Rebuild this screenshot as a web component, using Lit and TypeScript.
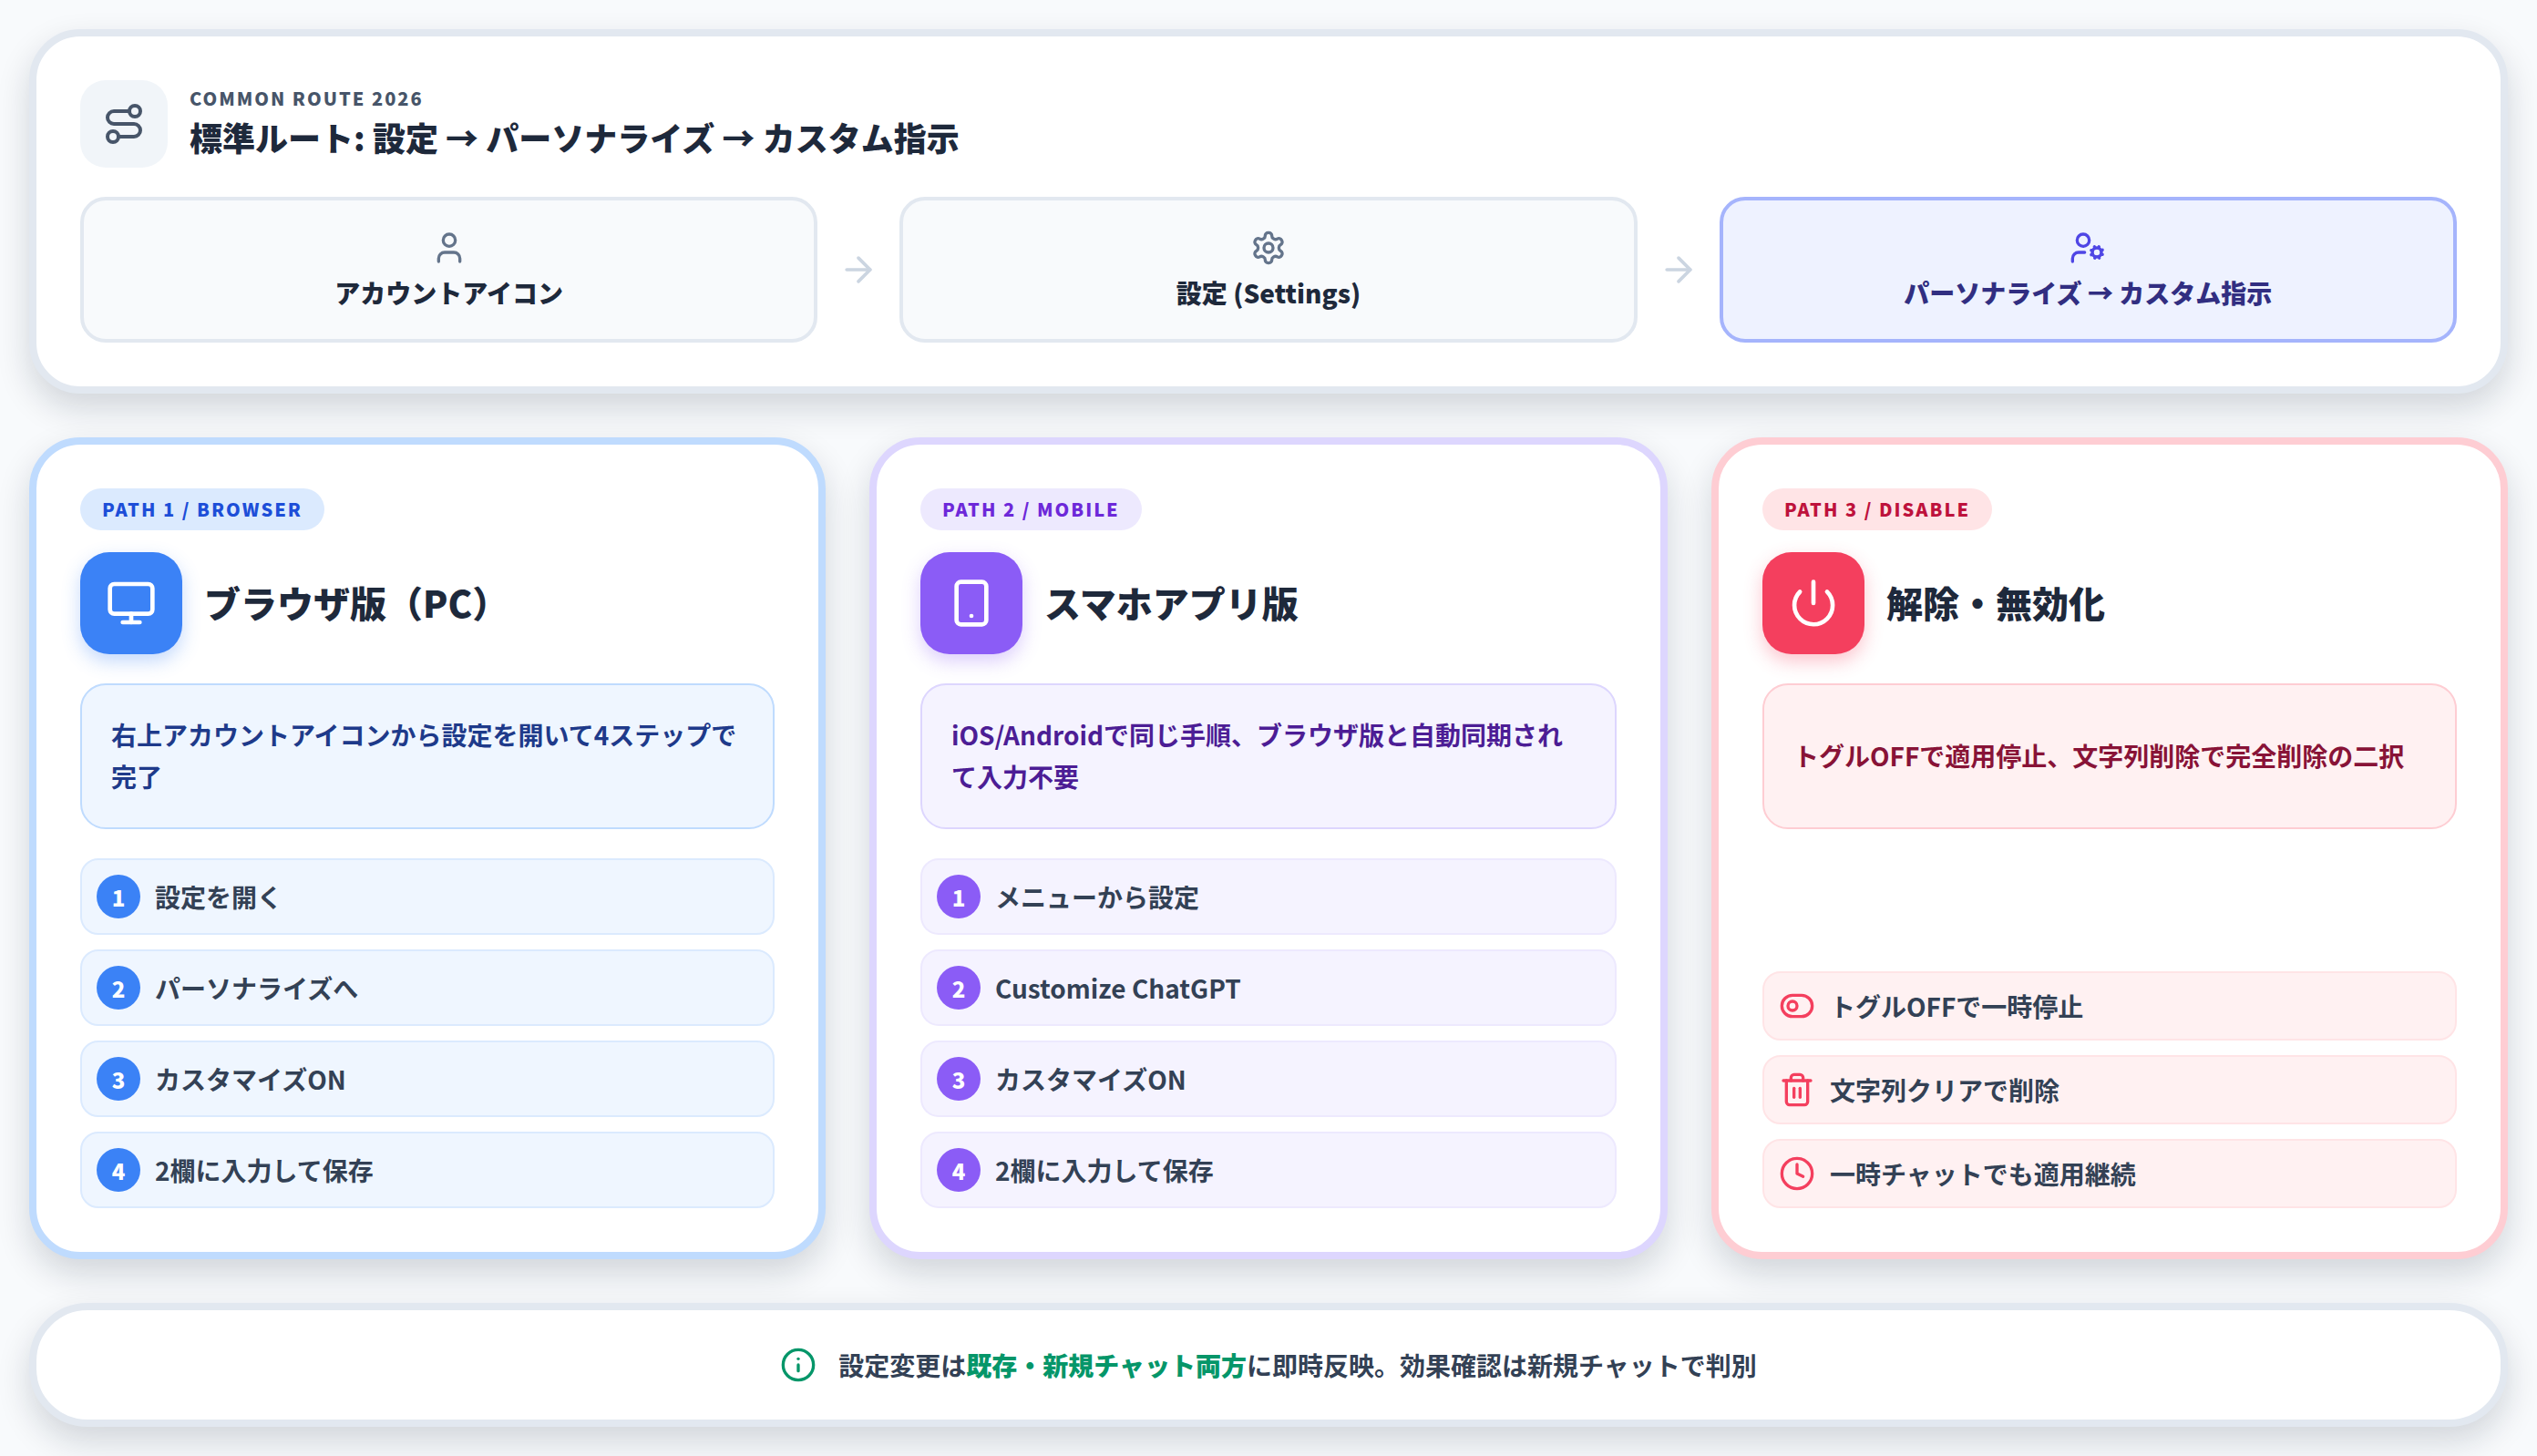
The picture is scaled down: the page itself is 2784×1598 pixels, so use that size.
import { LitElement, html, css, svg } from "lit";
import { customElement } from "lit/decorators.js";

const ic = (paths: unknown, size: number, cls = "") =>
  html`<svg class="ic ${cls}" style="width:${size}px;height:${size}px" viewBox="0 0 24 24" fill="none" stroke="currentColor" stroke-width="2" stroke-linecap="round" stroke-linejoin="round">${paths}</svg>`;

const I = {
  route: svg`<circle cx="6" cy="19" r="3"/><path d="M9 19h8.5a3.5 3.5 0 0 0 0-7h-11a3.5 3.5 0 0 1 0-7H15"/><circle cx="18" cy="5" r="3"/>`,
  user: svg`<path d="M19 21v-2a4 4 0 0 0-4-4H9a4 4 0 0 0-4 4v2"/><circle cx="12" cy="7" r="4"/>`,
  settings: svg`<path d="M12.22 2h-.44a2 2 0 0 0-2 2v.18a2 2 0 0 1-1 1.73l-.43.25a2 2 0 0 1-2 0l-.15-.08a2 2 0 0 0-2.73.73l-.22.38a2 2 0 0 0 .73 2.73l.15.1a2 2 0 0 1 1 1.72v.51a2 2 0 0 1-1 1.74l-.15.09a2 2 0 0 0-.73 2.73l.22.38a2 2 0 0 0 2.73.73l.15-.08a2 2 0 0 1 2 0l.43.25a2 2 0 0 1 1 1.73V20a2 2 0 0 0 2 2h.44a2 2 0 0 0 2-2v-.18a2 2 0 0 1 1-1.73l.43-.25a2 2 0 0 1 2 0l.15.08a2 2 0 0 0 2.73-.73l.22-.39a2 2 0 0 0-.73-2.73l-.15-.08a2 2 0 0 1-1-1.74v-.5a2 2 0 0 1 1-1.74l.15-.09a2 2 0 0 0 .73-2.73l-.22-.38a2 2 0 0 0-2.73-.73l-.15.08a2 2 0 0 1-2 0l-.43-.25a2 2 0 0 1-1-1.73V4a2 2 0 0 0-2-2z"/><circle cx="12" cy="12" r="3"/>`,
  userCog: svg`<circle cx="18" cy="15" r="3"/><circle cx="9" cy="7" r="4"/><path d="M10 15H6a4 4 0 0 0-4 4v2"/><path d="m21.7 16.4-.9-.3"/><path d="m15.2 13.9-.9-.3"/><path d="m16.6 18.7.3-.9"/><path d="m19.1 12.2.3-.9"/><path d="m19.6 18.7-.4-1"/><path d="m16.8 12.3-.4-1"/><path d="m14.3 16.6 1-.4"/><path d="m20.7 13.8 1-.4"/>`,
  arrow: svg`<path d="M5 12h14"/><path d="m12 5 7 7-7 7"/>`,
  monitor: svg`<rect width="20" height="14" x="2" y="3" rx="2"/><line x1="8" x2="16" y1="21" y2="21"/><line x1="12" x2="12" y1="17" y2="21"/>`,
  phone: svg`<rect width="14" height="20" x="5" y="2" rx="2" ry="2"/><path d="M12 18h.01"/>`,
  power: svg`<path d="M12 2v10"/><path d="M18.4 6.6a9 9 0 1 1-12.77.04"/>`,
  toggle: svg`<circle cx="9" cy="12" r="3"/><rect width="20" height="14" x="2" y="5" rx="7"/>`,
  trash: svg`<path d="M3 6h18"/><path d="M19 6v14c0 1-1 2-2 2H7c-1 0-2-1-2-2V6"/><path d="M8 6V4c0-1 1-2 2-2h4c1 0 2 1 2 2v2"/><line x1="10" x2="10" y1="11" y2="17"/><line x1="14" x2="14" y1="11" y2="17"/>`,
  clock: svg`<circle cx="12" cy="12" r="10"/><polyline points="12 6 12 12 16 14"/>`,
  info: svg`<circle cx="12" cy="12" r="10"/><path d="M12 16v-4"/><path d="M12 8h.01"/>`,
};

@customElement("app-root")
export class AppRoot extends LitElement {
  static styles = css`
    :host {
      display: flex;
      flex-direction: column;
      gap: 48px;
      box-sizing: border-box;
      width: 2784px;
      height: 1598px;
      padding: 32px;
      background: #f8fafc;
      color: #1e293b;
      font-family: "Noto Sans CJK JP", "Noto Sans", sans-serif;
      overflow: hidden;
    }
    * { box-sizing: border-box; }
    .ic { display: block; flex: none; }
    .panel {
      background: #fff;
      border: 8px solid #e2e8f0;
      border-radius: 56px;
      box-shadow: 0 16px 36px rgba(15, 23, 42, 0.16);
    }
    .top { padding: 48px; display: flex; flex-direction: column; gap: 32px; }
    .head { display: flex; align-items: center; gap: 24px; height: 96px; }
    .head-ic {
      width: 96px; height: 96px; border-radius: 28px; background: #f1f5f9; color: #475569;
      display: flex; align-items: center; justify-content: center; flex: none;
    }
    .head-txt { display: flex; flex-direction: column; gap: 4px; padding-bottom: 4px; }
    .eyebrow { font-size: 20px; line-height: 28px; font-weight: 900; letter-spacing: 2px; color: #475569; }
    .title { font-size: 36px; line-height: 48px; font-weight: 900; color: #1e293b; }
    .route { display: flex; align-items: center; gap: 23px; }
    .step {
      flex: 1 1 0; min-width: 0; height: 160px; border: 4px solid #e2e8f0; border-radius: 28px; background: #f8fafc;
      display: flex; flex-direction: column; align-items: center; justify-content: center; gap: 9px;
      color: #64748b;
    }
    .step span { font-size: 28px; line-height: 40px; font-weight: 900; color: #1e293b; }
    .step.on { background: #eef2ff; border-color: #a5b4fc; color: #4f46e5; }
    .step.on span { color: #312e81; }
    .sep { color: #cbd5e1; flex: none; }
    .cols { display: grid; grid-template-columns: 874px 876px 874px; gap: 48px; }
    .card { padding: 48px; display: flex; flex-direction: column; }
    .blue { --bd: #bfdbfe; --pill: #dbeafe; --pilltx: #1d4ed8; --accent: #3b82f6; --soft: #eff6ff; --sum: #1e3a8a; --row: #dbeafe; --glow: rgba(59, 130, 246, 0.3); }
    .violet { --bd: #ddd6fe; --pill: #ede9fe; --pilltx: #6d28d9; --accent: #8b5cf6; --soft: #f5f3ff; --sum: #4c1d95; --row: #ede9fe; --glow: rgba(139, 92, 246, 0.3); }
    .rose { --bd: #fecdd3; --pill: #ffe4e6; --pilltx: #be123c; --accent: #f43f5e; --soft: #fff1f2; --sum: #881337; --row: #ffe4e6; --glow: rgba(244, 63, 94, 0.3); }
    .card { border-color: var(--bd); }
    .pill {
      align-self: flex-start; height: 46px; padding: 0 24px; border-radius: 23px; background: var(--pill); color: var(--pilltx);
      font-size: 20px; line-height: 46px; font-weight: 900; letter-spacing: 2px;
    }
    .card-head { display: flex; align-items: center; gap: 24px; margin-top: 24px; }
    .card-ic {
      width: 112px; height: 112px; border-radius: 32px; background: var(--accent); color: #fff; flex: none;
      display: flex; align-items: center; justify-content: center; box-shadow: 0 8px 20px var(--glow);
    }
    .card-title { font-size: 40px; line-height: 56px; font-weight: 900; color: #1e293b; padding-bottom: 2px; }
    .summary {
      margin-top: 32px; min-height: 160px; border: 2px solid var(--bd); border-radius: 28px; background: var(--soft); padding: 0 32px 2px;
      display: flex; align-items: center; font-size: 28px; line-height: 46px; font-weight: 700; color: var(--sum);
    }
    .rows { display: flex; flex-direction: column; gap: 16px; margin-top: 32px; }
    .rows.end { margin-top: auto; }
    .row {
      height: 84px; border: 2px solid var(--row); border-radius: 20px; background: var(--soft); padding: 0 16px;
      display: flex; align-items: center; gap: 16px; font-size: 28px; font-weight: 700; color: #334155;
    }
    .rows.end .row { height: 76px; }
    .rows.end .ic { color: var(--accent); }
    .num {
      width: 48px; height: 48px; border-radius: 50%; background: var(--accent); color: #fff; flex: none;
      display: flex; align-items: center; justify-content: center; font-size: 24px; font-weight: 900;
    }
    .foot {
      height: 136px; border-radius: 64px; display: flex; align-items: center; justify-content: center; gap: 24px;
      font-size: 28px; font-weight: 700; color: #334155;
    }
    .foot .ic { color: #059669; }
    .foot b { font-weight: 900; color: #059669; }
  `;

  private num(items: string[]) {
    return html`<div class="rows">
      ${items.map((t, i) => html`<div class="row"><div class="num">${i + 1}</div><div>${t}</div></div>`)}
    </div>`;
  }

  render() {
    return html`
      <section class="panel top">
        <div class="head">
          <div class="head-ic">${ic(I.route, 48)}</div>
          <div class="head-txt">
            <div class="eyebrow">COMMON ROUTE 2026</div>
            <div class="title">標準ルート: 設定 → パーソナライズ → カスタム指示</div>
          </div>
        </div>
        <div class="route">
          <div class="step">${ic(I.user, 40)}<span>アカウントアイコン</span></div>
          ${ic(I.arrow, 44, "sep")}
          <div class="step">${ic(I.settings, 40)}<span>設定 (Settings)</span></div>
          ${ic(I.arrow, 44, "sep")}
          <div class="step on">${ic(I.userCog, 40)}<span>パーソナライズ → カスタム指示</span></div>
        </div>
      </section>
      <div class="cols">
        <section class="panel card blue">
          <div class="pill">PATH 1 / BROWSER</div>
          <div class="card-head"><div class="card-ic">${ic(I.monitor, 56)}</div><div class="card-title">ブラウザ版（PC）</div></div>
          <div class="summary"><div>右上アカウントアイコンから設定を開いて4ステップで完了</div></div>
          ${this.num(["設定を開く", "パーソナライズへ", "カスタマイズON", "2欄に入力して保存"])}
        </section>
        <section class="panel card violet">
          <div class="pill">PATH 2 / MOBILE</div>
          <div class="card-head"><div class="card-ic">${ic(I.phone, 56)}</div><div class="card-title">スマホアプリ版</div></div>
          <div class="summary"><div>iOS/Androidで同じ手順、ブラウザ版と自動同期されて入力不要</div></div>
          ${this.num(["メニューから設定", "Customize ChatGPT", "カスタマイズON", "2欄に入力して保存"])}
        </section>
        <section class="panel card rose">
          <div class="pill">PATH 3 / DISABLE</div>
          <div class="card-head"><div class="card-ic">${ic(I.power, 56)}</div><div class="card-title">解除・無効化</div></div>
          <div class="summary"><div>トグルOFFで適用停止、文字列削除で完全削除の二択</div></div>
          <div class="rows end">
            <div class="row">${ic(I.toggle, 40)}<div>トグルOFFで一時停止</div></div>
            <div class="row">${ic(I.trash, 40)}<div>文字列クリアで削除</div></div>
            <div class="row">${ic(I.clock, 40)}<div>一時チャットでも適用継続</div></div>
          </div>
        </section>
      </div>
      <section class="panel foot">
        ${ic(I.info, 40)}
        <div>設定変更は<b>既存・新規チャット両方</b>に即時反映。効果確認は新規チャットで判別</div>
      </section>
    `;
  }
}
